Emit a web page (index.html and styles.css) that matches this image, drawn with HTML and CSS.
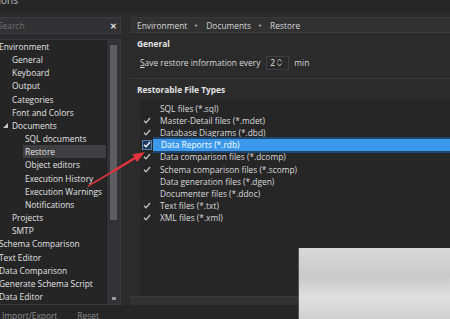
FILE: index.html
```html
<!DOCTYPE html>
<html>
<head>
<meta charset="utf-8">
<link rel="stylesheet" href="styles.css">
</head>
<body>
<div class="title"><span>Options</span></div>
<div class="main">
  <div class="left">
    <div class="search"><span class="ph">Search</span><span class="clear">✕</span></div>
    <div class="tree">
      <div class="items">
        <div class="it l0">Environment</div>
        <div class="it l1">General</div>
        <div class="it l1">Keyboard</div>
        <div class="it l1">Output</div>
        <div class="it l1">Categories</div>
        <div class="it l1">Font and Colors</div>
        <div class="it l1 exp"><svg class="tri" width="5" height="5" viewBox="0 0 5 5"><path d="M5 0 L5 5 L0 5 Z" fill="#c8c8c8"/></svg>Documents</div>
        <div class="it l2">SQL documents</div>
        <div class="it l2 sel">Restore</div>
        <div class="it l2">Object editors</div>
        <div class="it l2">Execution History</div>
        <div class="it l2">Execution Warnings</div>
        <div class="it l2">Notifications</div>
        <div class="it l1">Projects</div>
        <div class="it l1">SMTP</div>
        <div class="it l0">Schema Comparison</div>
        <div class="it l0">Text Editor</div>
        <div class="it l0">Data Comparison</div>
        <div class="it l0">Generate Schema Script</div>
        <div class="it l0">Data Editor</div>
      </div>
      <div class="scroll">
        <div class="thumb"></div>
        <div class="sarrow"></div>
      </div>
    </div>
  </div>
  <div class="right">
    <div class="crumbs">
      <span>Environment</span><span class="sep">▸</span><span>Documents</span><span class="sep">▸</span><span>Restore</span>
    </div>
    <div class="sec">General</div>
    <div class="row">
      <span><u>S</u>ave restore information every</span>
      <span class="spin"><span class="num">2</span><svg width="5" height="9" viewBox="0 0 5 9"><path d="M0.5 3.5 L2.5 1 L4.5 3.5 M0.5 5.5 L2.5 8 L4.5 5.5" stroke="#bbb" stroke-width="1" fill="none"/></svg></span>
      <span>min</span>
    </div>
    <div class="sep-line"></div>
    <div class="sec">Restorable File Types</div>
    <div class="list">
      <div class="fr"><span class="cb"></span><span>SQL files (*.sql)</span></div>
      <div class="fr"><span class="cb on"><svg width="8" height="7" viewBox="0 0 8 7"><path d="M1 3.8 L3 5.8 L7 1" stroke="#c4c4c4" stroke-width="1.3" fill="none"/></svg></span><span>Master-Detail files (*.mdet)</span></div>
      <div class="fr"><span class="cb on"><svg width="8" height="7" viewBox="0 0 8 7"><path d="M1 3.8 L3 5.8 L7 1" stroke="#c4c4c4" stroke-width="1.3" fill="none"/></svg></span><span>Database Diagrams (*.dbd)</span></div>
      <div class="fr hl"><span class="cb box"><svg width="8" height="7" viewBox="0 0 8 7"><path d="M1 3.8 L3 5.8 L7 1" stroke="#ffffff" stroke-width="1.3" fill="none"/></svg></span><span class="hltext">Data Reports (*.rdb)</span></div>
      <div class="fr"><span class="cb on"><svg width="8" height="7" viewBox="0 0 8 7"><path d="M1 3.8 L3 5.8 L7 1" stroke="#c4c4c4" stroke-width="1.3" fill="none"/></svg></span><span>Data comparison files (*.dcomp)</span></div>
      <div class="fr"><span class="cb on"><svg width="8" height="7" viewBox="0 0 8 7"><path d="M1 3.8 L3 5.8 L7 1" stroke="#c4c4c4" stroke-width="1.3" fill="none"/></svg></span><span>Schema comparison files (*.scomp)</span></div>
      <div class="fr"><span class="cb"></span><span>Data generation files (*.dgen)</span></div>
      <div class="fr"><span class="cb"></span><span>Documenter files (*.ddoc)</span></div>
      <div class="fr"><span class="cb on"><svg width="8" height="7" viewBox="0 0 8 7"><path d="M1 3.8 L3 5.8 L7 1" stroke="#c4c4c4" stroke-width="1.3" fill="none"/></svg></span><span>Text files (*.txt)</span></div>
      <div class="fr"><span class="cb on"><svg width="8" height="7" viewBox="0 0 8 7"><path d="M1 3.8 L3 5.8 L7 1" stroke="#c4c4c4" stroke-width="1.3" fill="none"/></svg></span><span>XML files (*.xml)</span></div>
    </div>
    <div class="band"></div>
  </div>
</div>
<div class="footer"><span>Import/Export</span><span>Reset</span></div>
<svg class="redarrow" width="60" height="40" viewBox="0 0 60 40">
  <path d="M0 36 L24 22" stroke="#e2343c" stroke-width="1.5" fill="none"/>
  <path d="M24 22 L47 8" stroke="#e2343c" stroke-width="2.4" fill="none"/>
  <path d="M57 2 L49 12 L44.4 4.2 Z" fill="#e2343c"/>
</svg>
<div class="watermark"></div>
</body>
</html>
```

FILE: styles.css
```css
* { box-sizing: border-box; }
html, body { margin: 0; padding: 0; }
body {
  width: 450px;
  height: 319px;
  overflow: hidden;
  background: #2b2b2c;
  font-family: "Open Sans", "Noto Sans", sans-serif;
  font-size: 8.4px;
  color: #dcdcdc;
  position: relative;
}
.title {
  height: 12px;
  overflow: hidden;
  background: #262627;
  color: #bdbdbd;
}
.title span {
  display: block;
  margin-top: -7px;
  margin-left: -19px;
  font-size: 10px;
}
.main {
  display: flex;
  margin-top: 5px;
  height: 288px;
}
.left {
  width: 121px;
  display: flex;
  flex-direction: column;
  gap: 5px;
}
.search {
  height: 17px;
  background: #323234;
  border: 1px solid #3c3c3f;
  border-left: none;
  display: flex;
  align-items: center;
  justify-content: space-between;
  padding-right: 3px;
}
.ph { color: #6e6e70; margin-left: -2px; }
.clear { color: #e6e6e6; font-size: 8px; font-weight: bold; }
.tree {
  flex: 1;
  display: flex;
  background: #252526;
  border: 1px solid #3a3a3c;
  border-left: none;
}
.items {
  flex: 1;
  padding-top: 0;
  overflow: hidden;
  border-right: 1px solid #1f1f20;
  white-space: nowrap;
}
.it {
  height: 13.16px;
  line-height: 13.16px;
  color: #e2e2e2;
  display: flex;
  align-items: center;
}
.l0 { padding-left: 0; margin-left: -1px; }
.l1 { padding-left: 12px; }
.l2 { padding-left: 25px; }
.exp { padding-left: 3px; }
.tri { margin-right: 4px; }
.sel {
  background: #3f3f42;
  margin-left: 23px;
  padding-left: 2px;
}
.scroll {
  width: 13px;
  background: #333336;
  display: flex;
  flex-direction: column;
  align-items: center;
  padding-top: 5px;
  padding-bottom: 4px;
}
.thumb {
  width: 7px;
  height: 175px;
  background: #5d5d60;
}
.sarrow {
  margin-top: auto;
  width: 4px;
  height: 3px;
  background: #9a9a9a;
}
.right {
  flex: 1;
  margin-left: 9px;
  display: flex;
  flex-direction: column;
}
.crumbs {
  height: 16px;
  background: #313132;
  border-top: 1px solid #383839;
  border-bottom: 1px solid #3a3a3b;
  display: flex;
  align-items: center;
  padding-left: 7px;
  gap: 5px;
  color: #d6d6d6;
}
.sep { color: #9a9a9a; font-size: 6px; margin: 0 3px; }
.sec {
  height: 12px;
  line-height: 12px;
  font-weight: bold;
  color: #e2e2e2;
  padding-left: 7px;
  margin-top: 5px;
}
.row {
  display: flex;
  align-items: center;
  height: 15px;
  margin-top: 5px;
  padding-left: 10px;
  gap: 5px;
  color: #d8d8d8;
}
.row u { text-decoration: underline; }
.spin {
  display: flex;
  align-items: center;
  gap: 2px;
  height: 14px;
  width: 23px;
  border: 1px solid #3e3e40;
  background: #2a2a2b;
  padding-left: 3px;
  margin-left: 1px;
}
.num { color: #e6e6e6; }
.sep-line {
  height: 1px;
  margin-top: 8px;
  background: #393939;
}
.list {
  flex: 1;
  margin-top: 4px;
  margin-left: 10px;
  background: #262627;
  padding-top: 2px;
  padding-left: 2px;
  white-space: nowrap;
  overflow: hidden;
}
.fr {
  height: 12.2px;
  display: flex;
  align-items: center;
  gap: 8px;
  color: #dadada;
}
.cb {
  width: 10px;
  height: 10px;
  display: flex;
  align-items: center;
  justify-content: center;
  flex: none;
}
.cb.box {
  background: #1d3a5e;
  border: 1px solid #5a7fa8;
}
.hltext {
  flex: 1;
  align-self: stretch;
  background: #3b98ea;
  color: #ffffff;
  box-shadow: 0 -2px 0 #1d4670, 0 2px 0 #1d4670;
  padding-left: 8px;
  margin-left: -7px;
  line-height: 12.2px;
}
.band {
  height: 9px;
  background: #323233;
  border-top: 1px solid #3a3a3a;
}
.footer {
  height: 14px;
  background: #262627;
  display: flex;
  gap: 20px;
  padding-left: 2px;
  color: #8a8a8a;
  overflow: hidden;
  line-height: 22px;
}
.redarrow {
  position: absolute;
  left: 88px;
  top: 150px;
}
.watermark {
  position: absolute;
  left: 298px;
  top: 248px;
  width: 152px;
  height: 71px;
  background: linear-gradient(180deg, #d9d9d9 0%, #c9c9c9 40%, #e0e0e0 70%, #cfcfcf 100%);
  border-left: 1px solid #555;
}
```
